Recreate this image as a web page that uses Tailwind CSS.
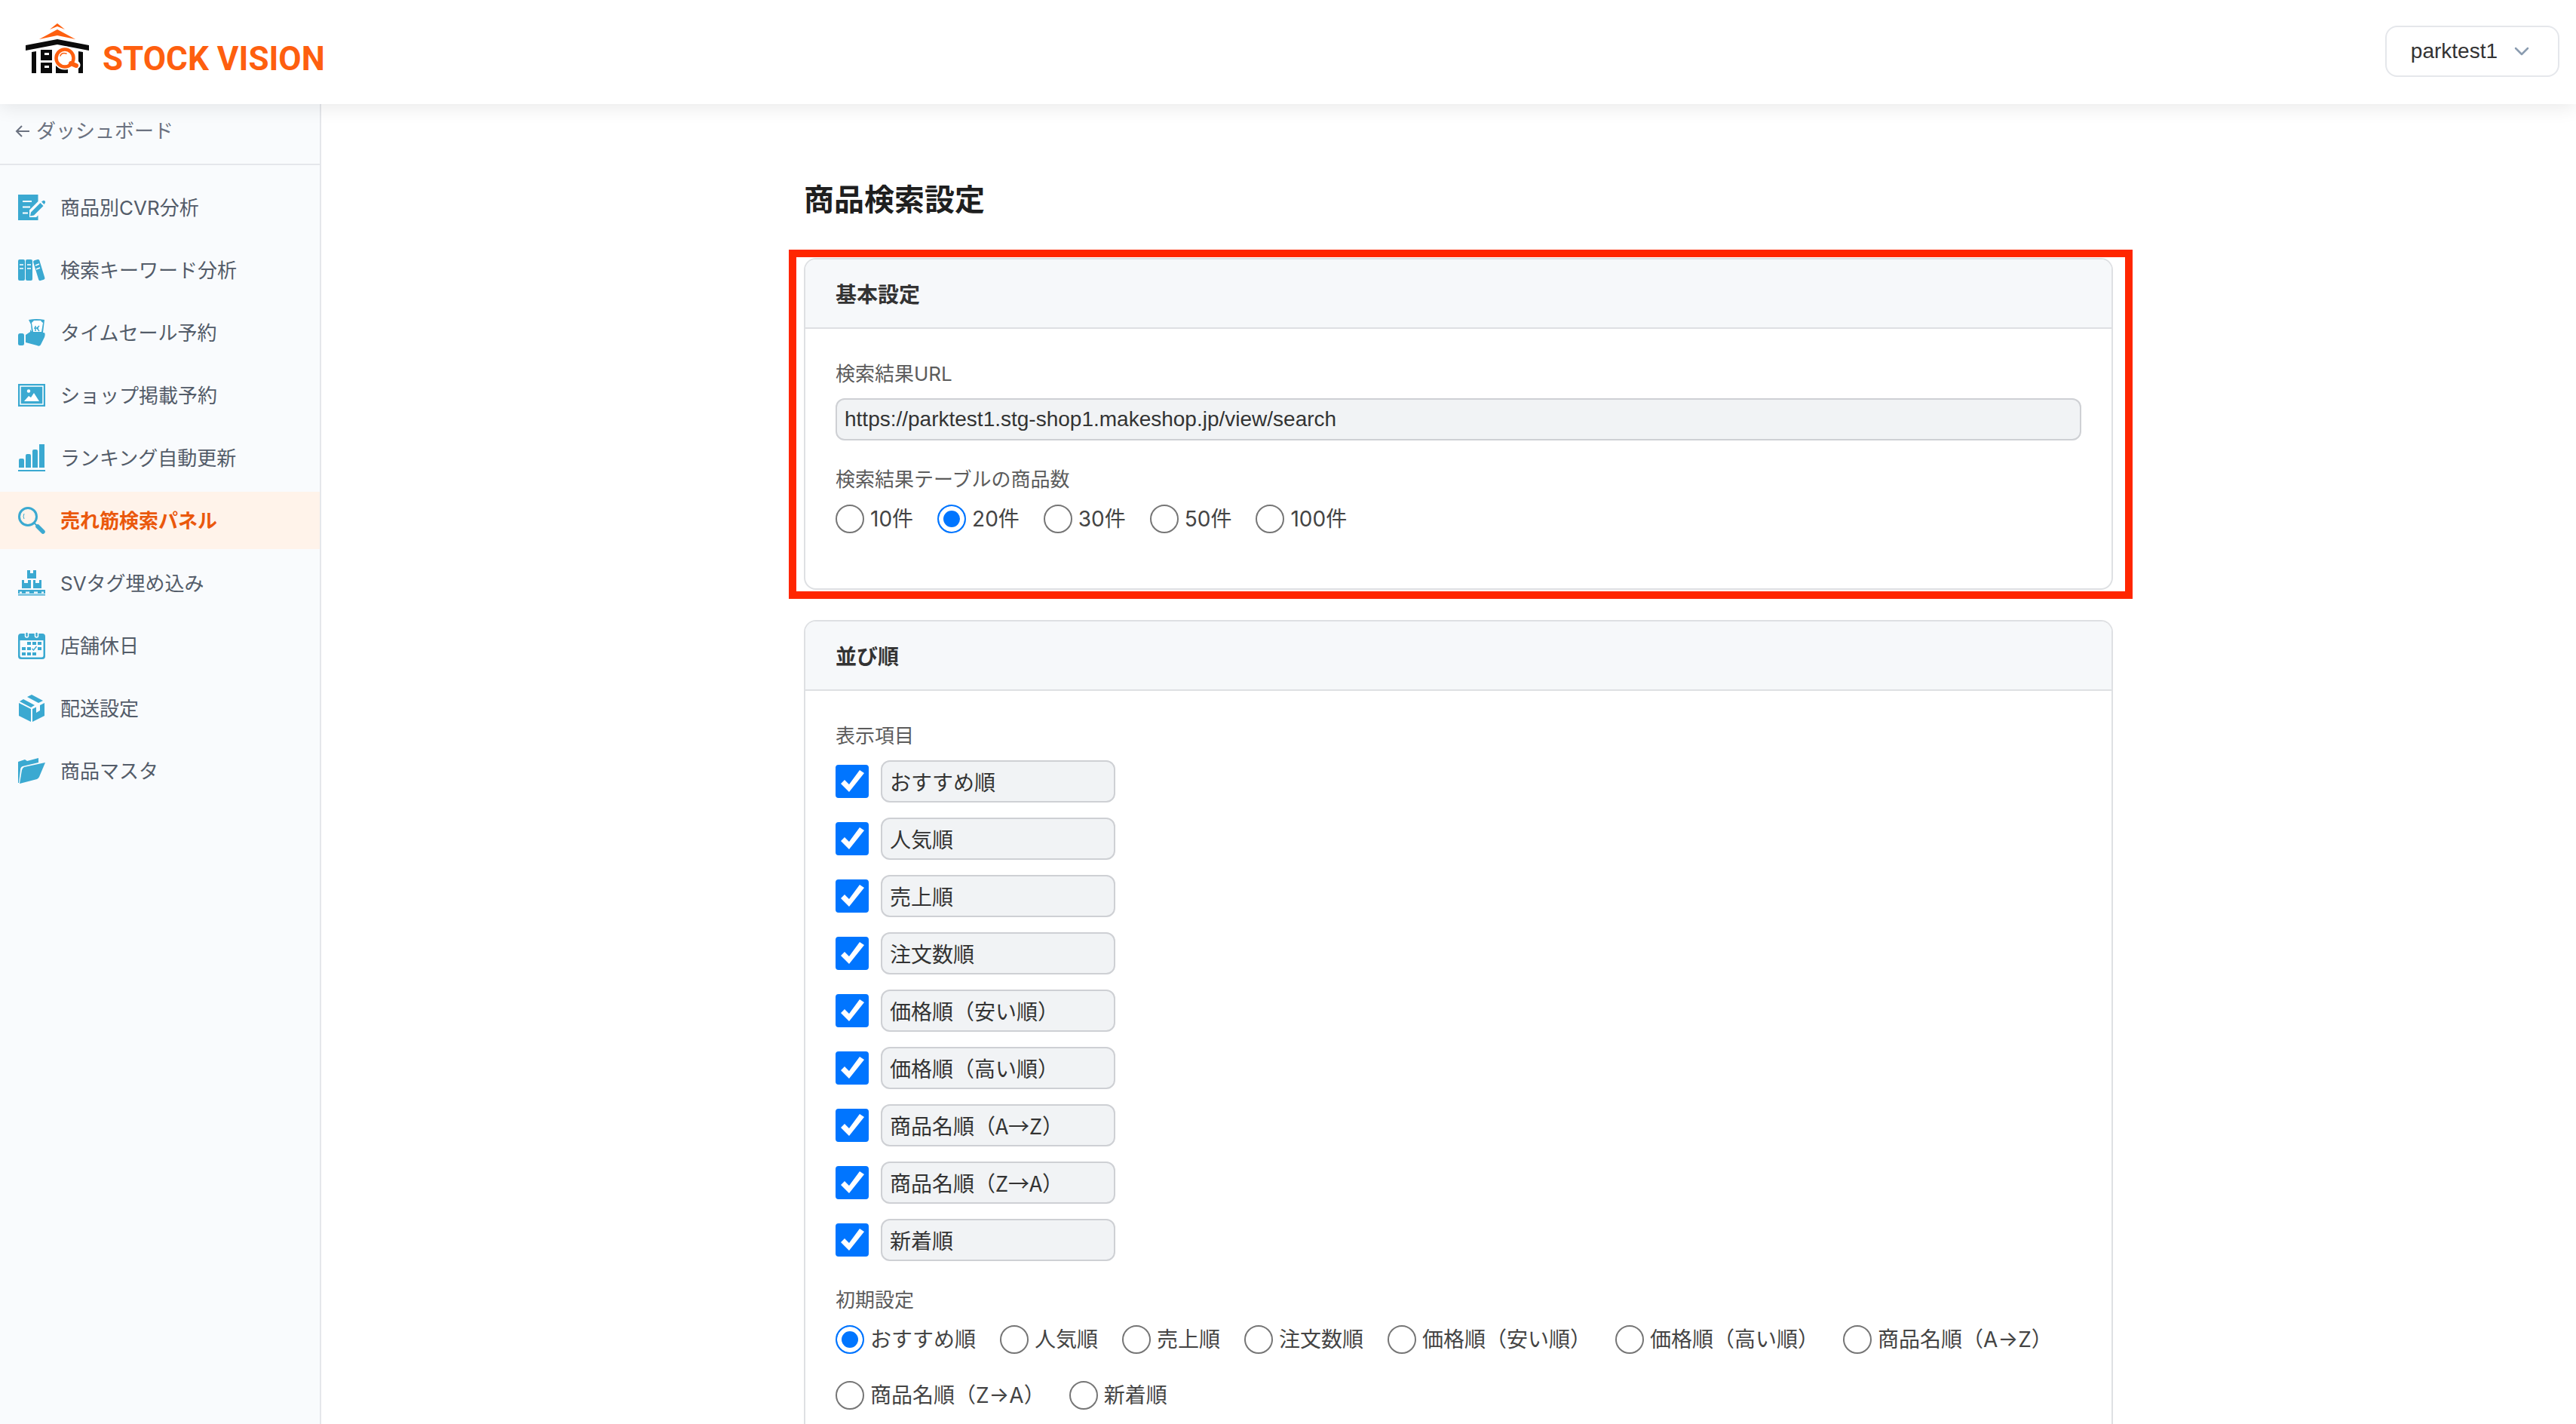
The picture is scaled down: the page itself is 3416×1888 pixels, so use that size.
<!DOCTYPE html>
<html lang="ja">
<head>
    <meta charset="UTF-8">
    <meta name="viewport" content="width=device-width, initial-scale=1.0">
    <script src="https://cdn.jsdelivr.net/npm/@tailwindcss/browser@4"></script>
    <title>商品検索設定 | STOCK VISION</title>
</head>
<body class="h-screen flex flex-col overflow-hidden bg-white text-[#333] font-['Inter','Noto_Sans_CJK_JP',sans-serif]">

    <header class="relative z-10 flex shrink-0 items-center justify-between h-[138px] pl-8 pr-[22px] bg-white shadow-[0_4px_24px_rgba(0,0,0,0.09)]">
        <a href="#" class="flex items-center gap-4">
            <svg class="w-[88px] h-[72px] mb-[10px]" viewBox="0 0 88 72" aria-hidden="true">
                <path fill="#fe5f0f" d="M44 3l10 8-10-4-10 4zM44 11l24 13-24-5-24 5z"/>
                <path fill="#0b0b0b" d="M44 24l42 8v7l-42-8-42 8v-7z"/>
                <path fill="#0b0b0b" d="M10 41l6-1v29h-6zM72 40l6 1v28h-6zM22 38h15v14H22zM22 55h15v14H22zM42 58h8l8 5v6H42z"/>
                <path fill="#fff" d="M27 42h6v3h-6zM27 59h6v3h-6z"/>
                <path stroke="#fff" stroke-width="11" stroke-linecap="round" d="M64 54l5 4"/>
                <circle cx="54" cy="49" r="11.500" fill="#fff" stroke="#fff" stroke-width="8"/>
                <circle cx="54" cy="49" r="11.500" fill="#fff" stroke="#fe5f0f" stroke-width="4.500"/>
                <path stroke="#fe5f0f" stroke-width="6" stroke-linecap="round" d="M62 56l7 3"/>
                <path fill="none" stroke="#fe5f0f" stroke-width="1.500" stroke-linecap="round" d="M48 46c1-3 4-4 8-3"/>
            </svg>
            <span class="mt-[18px] text-[44px] leading-none font-bold text-[#fe5f0f] font-['Roboto',sans-serif]">STOCK VISION</span>
        </a>
        <button type="button" class="flex items-center gap-[22px] h-[68px] mb-[2px] pl-8 pr-[38px] border-2 border-[#e5e7eb] rounded-2xl bg-white text-[28px] font-['Liberation_Sans',sans-serif]">
            parktest1
            <svg class="w-5 h-3" viewBox="0 0 20 12" fill="none" stroke="#8b9cb0" stroke-width="2.500" stroke-linecap="round" stroke-linejoin="round" aria-hidden="true"><path d="M2 2l8 8 8-8"/></svg>
        </button>
    </header>

    <div class="flex flex-1 min-h-0">
        <aside class="w-[426px] shrink-0 border-r-2 border-[#e5e7eb] bg-[#f9fbfd]">
            <a href="#" class="flex items-center gap-2 h-[81px] pl-5 pb-2 border-b-2 border-[#e5e7eb] text-[26px] text-[#6b7280]">
                <svg class="w-5 h-5" viewBox="0 0 20 20" fill="none" stroke="currentColor" stroke-width="2" aria-hidden="true"><path d="M19 10H2M9 3l-7 7 7 7"/></svg>
                ダッシュボード
            </a>
            <nav id="menu" class="flex flex-col gap-[7px] mt-[18px] text-[26px] text-[#535c69]">
                <a href="#" class="flex items-center gap-5 h-[76px] px-6">
                    <svg class="w-9 h-9" viewBox="0 0 36 36" fill="#3ba9d1" aria-hidden="true">
                        <path d="M0 1h26.500v9L15 21.500V31h9l2.500-2.500V35H0z"/>
                        <path fill="none" stroke="#fff" stroke-width="2" d="M6 10h12M6 17.500h10M6 25.500h7"/>
                        <path d="M17 24.500L29.500 12l4 4L21 28.500l-5 1zM31 10.500l1.500-1a2 2 0 0 1 3 3L34.500 14z"/>
                    </svg>
                    商品別CVR分析
                </a>
                <a href="#" class="flex items-center gap-5 h-[76px] px-6">
                    <svg class="w-9 h-9" viewBox="0 0 36 36" fill="#3ba9d1" aria-hidden="true">
                        <rect x="0" y="4" width="9" height="28" rx="2"/>
                        <rect x="10" y="4" width="9" height="28" rx="2"/>
                        <rect x="23.500" y="4" width="8.500" height="28" rx="2" transform="rotate(-17 28 18)"/>
                        <path fill="none" stroke="#fff" stroke-width="1.500" d="M2 11h5M2 16h5M12 11h5M12 16h5M23 12l5-2M24 17l5-2"/>
                    </svg>
                    検索キーワード分析
                </a>
                <a href="#" class="flex items-center gap-5 h-[76px] px-6">
                    <svg class="w-9 h-9" viewBox="0 0 36 36" fill="#3ba9d1" aria-hidden="true">
                        <rect x="0" y="19" width="8" height="16" rx="2.500"/>
                        <path d="M10 21l6-4V14l3 4h15c2 0 2 3 1 6l-5 10c-1 2-3 2-5 1l-15-4z"/>
                        <path d="M14 1q10-2 21 0l-2 17H18L17 7z"/>
                        <path fill="#fff" d="M18 5q2-2 3-3h9q1 2 3 3l-2 12H20z"/>
                        <path fill="none" stroke="#3ba9d1" stroke-width="1.500" d="M23 9v7M21 12h6M28 9l-3 3 3 4"/>
                    </svg>
                    タイムセール予約
                </a>
                <a href="#" class="flex items-center gap-5 h-[76px] px-6">
                    <svg class="w-9 h-9" viewBox="0 0 36 36" fill="#3ba9d1" aria-hidden="true">
                        <path d="M0 3h36v30H0z"/>
                        <path fill="none" stroke="#fff" stroke-width="1.500" d="M3 6h30v24H3z"/>
                        <circle cx="14" cy="12.500" r="2.200" fill="#fff"/>
                        <path fill="#fff" d="M8 26l6-7 3 2 4-6 7 11z"/>
                    </svg>
                    ショップ掲載予約
                </a>
                <a href="#" class="flex items-center gap-5 h-[76px] px-6">
                    <svg class="w-9 h-9" viewBox="0 0 36 36" fill="#3ba9d1" aria-hidden="true">
                        <path d="M0 34h36v2H0zM1 21q0-2 2-2h3q2 0 2 2v10H1zM10 15q0-2 2-2h3q2 0 2 2v16h-7zM19 9q0-2 2-2h3q2 0 2 2v22h-7zM28 0h7v31h-7z"/>
                    </svg>
                    ランキング自動更新
                </a>
                <a href="#" aria-current="page" class="flex items-center gap-5 h-[76px] px-6 bg-[#fff3ea] font-bold text-[#ea580c]">
                    <svg class="w-9 h-9" viewBox="0 0 36 36" fill="none" stroke="#3ba9d1" aria-hidden="true">
                        <circle cx="13" cy="13" r="11.500" stroke-width="3"/>
                        <path stroke-width="2" d="M21 21l4 4"/>
                        <path stroke-width="5.500" stroke-linecap="round" d="M26 26l7 7"/>
                        <path stroke-width="1" d="M8 9q-2 4 0 7"/>
                    </svg>
                    売れ筋検索パネル
                </a>
                <a href="#" class="flex items-center gap-5 h-[76px] px-6">
                    <svg class="w-9 h-9" viewBox="0 0 36 36" fill="#3ba9d1" aria-hidden="true">
                        <path d="M12 1h4v4h4V1h4v11H12zM5 14h3v4h5v-4h4v11H5zM20 14h3v4h5v-4h3v11H20z"/>
                        <path d="M0 27h36v5H0zM0 33h36v1.500H0z"/>
                        <path fill="#fff" d="M2 29.500h3v2H2zM10 29.500h5v2h-5zM21 29.500h5v2h-5zM31 29.500h3v2h-3z"/>
                    </svg>
                    SVタグ埋め込み
                </a>
                <a href="#" class="flex items-center gap-5 h-[76px] px-6">
                    <svg class="w-9 h-9" viewBox="0 0 36 36" fill="#3ba9d1" aria-hidden="true">
                        <path fill-rule="evenodd" d="M4 2h28q4 0 4 4v26q0 4-4 4H4q-4 0-4-4V6q0-4 4-4zM2.500 11v20q0 2.500 2.500 2.500h26q2.500 0 2.500-2.500V11z"/>
                        <path stroke="#fff" stroke-width="1.500" d="M9.500 2q0-2 2-2t2 2v3q0 2-2 2t-2-2zM22.500 2q0-2 2-2t2 2v3q0 2-2 2t-2-2z"/>
                        <path d="M12 13h5v4h-5zM19 13h5v4h-5zM26 13h5v4h-5zM5 20h5v4H5zM12 20h5v4h-5zM26 20h5v4h-5zM5 27h5v4H5zM12 27h5v4h-5zM19 27h5v4h-5z"/>
                        <path fill="none" stroke="#3ba9d1" stroke-width="1.500" d="M18.500 22l2 2 4-5"/>
                    </svg>
                    店舗休日
                </a>
                <a href="#" class="flex items-center gap-5 h-[76px] px-6">
                    <svg class="w-9 h-9" viewBox="0 0 36 36" fill="#3ba9d1" aria-hidden="true">
                        <path d="M1 11l16 8v17L1 28zM35 11v17l-16 8V19l5-2.500V24l5-3v-7z"/>
                        <path d="M2 9l5-3 15 8-5 3zM12 3l6-3 15 8-6 3z"/>
                    </svg>
                    配送設定
                </a>
                <a href="#" class="flex items-center gap-5 h-[76px] px-6">
                    <svg class="w-9 h-9" viewBox="0 0 36 36" fill="#3ba9d1" aria-hidden="true">
                        <path d="M0 6l9-3 3 2 15-4v6L6 12q-3 1-3 5L1 34H0z"/>
                        <path d="M8 13l28-6-8 19q-1 2-3 3L2 35l3-18q1-3 3-4z"/>
                    </svg>
                    商品マスタ
                </a>
            </nav>
        </aside>

        <main class="flex-1 pl-[26px]">
            <div class="w-[1736px] max-w-full mx-auto pt-[98px]">
                <h1 class="mb-[37px] text-[40px] leading-[58px] font-bold text-[#1f1f1f]">商品検索設定</h1>

                <div class="-ml-5 -mr-[26px] border-10 border-[#ff2600] pl-[10px] pr-4 pt-px pb-[2px]">
                    <section class="border-2 border-[#dee0e3] rounded-2xl overflow-hidden h-[440px]">
                        <h2 class="px-10 pt-1 h-[92px] flex items-center bg-[#f6f8fa] border-b-2 border-[#dee0e3] text-[28px] font-bold">基本設定</h2>
                        <div class="px-10 pt-10">
                            <label for="url" class="block text-[26px] leading-[40px] text-[#5c5c5c]">検索結果URL</label>
                            <input type="text" id="url" readonly value="https://parktest1.stg-shop1.makeshop.jp/view/search" class="block mt-3 w-full h-14 px-[10px] border-2 border-[#ced0d4] rounded-xl bg-[#f1f3f5] text-[28px] font-['Liberation_Sans',sans-serif]">
                            <fieldset class="mt-8">
                                <legend class="text-[26px] leading-[40px] text-[#5c5c5c]">検索結果テーブルの商品数</legend>
                                <div id="counts" class="flex gap-8 mt-[11px] text-[28px] leading-[42px] text-[#444]"></div>
                            </fieldset>
                        </div>
                    </section>
                </div>

                <section class="mt-7 border-2 border-b-0 border-[#dee0e3] rounded-t-2xl overflow-hidden">
                    <h2 class="px-10 pt-1 h-[92px] flex items-center bg-[#f6f8fa] border-b-2 border-[#dee0e3] text-[28px] font-bold">並び順</h2>
                    <div class="px-10 pt-10 pb-20">
                        <fieldset>
                            <legend class="text-[26px] leading-[40px] text-[#5c5c5c]">表示項目</legend>
                            <div id="items" class="flex flex-col gap-5 mt-3"></div>
                        </fieldset>
                        <fieldset class="mt-8">
                            <legend class="text-[26px] leading-[40px] text-[#5c5c5c]">初期設定</legend>
                            <div id="defaults" class="flex flex-wrap gap-8 mt-[11px] text-[28px] leading-[42px] text-[#444]"></div>
                        </fieldset>
                    </div>
                </section>
            </div>
        </main>
    </div>

    <script>
        const counts = ["10件", "20件", "30件", "50件", "100件"];
        const orders = ["おすすめ順", "人気順", "売上順", "注文数順", "価格順（安い順）", "価格順（高い順）", "商品名順（A→Z）", "商品名順（Z→A）", "新着順"];

        function radio(name, text, checked) {
            return `<label class="flex items-center gap-2 whitespace-nowrap">
                <input type="radio" name="${name}" ${checked ? "checked" : ""} class="appearance-none w-[38px] h-[38px] rounded-full border-2 border-[#767676] bg-white checked:border-[#0075ff] checked:bg-[#0075ff] checked:shadow-[inset_0_0_0_6px_white]">
                ${text}
            </label>`;
        }

        function item(text, i) {
            return `<div class="flex items-center gap-4">
                <span class="relative flex w-11 h-11">
                    <input type="checkbox" checked id="use${i}" aria-label="${text}を表示" class="appearance-none w-11 h-11 rounded border-2 border-[#767676] checked:border-[#0075ff] checked:bg-[#0075ff]">
                    <svg class="absolute inset-0 w-11 h-11 pointer-events-none" viewBox="0 0 44 44" fill="#fff" aria-hidden="true"><path d="M7 25l5-5 6 6L32 7l6 4-20 25z"/></svg>
                </span>
                <input type="text" readonly value="${text}" aria-label="${text}の表示名" class="w-[311px] h-14 px-[10px] border-2 border-[#ced0d4] rounded-xl bg-[#f1f3f5] text-[28px] font-['Noto_Sans_CJK_JP',sans-serif]">
            </div>`;
        }

        document.getElementById("counts").innerHTML = counts.map((t, i) => radio("count", t, i == 1)).join("");
        document.getElementById("items").innerHTML = orders.map(item).join("");
        document.getElementById("defaults").innerHTML = orders.map((t, i) => radio("default", t, i == 0)).join("");
    </script>
</body>
</html>
